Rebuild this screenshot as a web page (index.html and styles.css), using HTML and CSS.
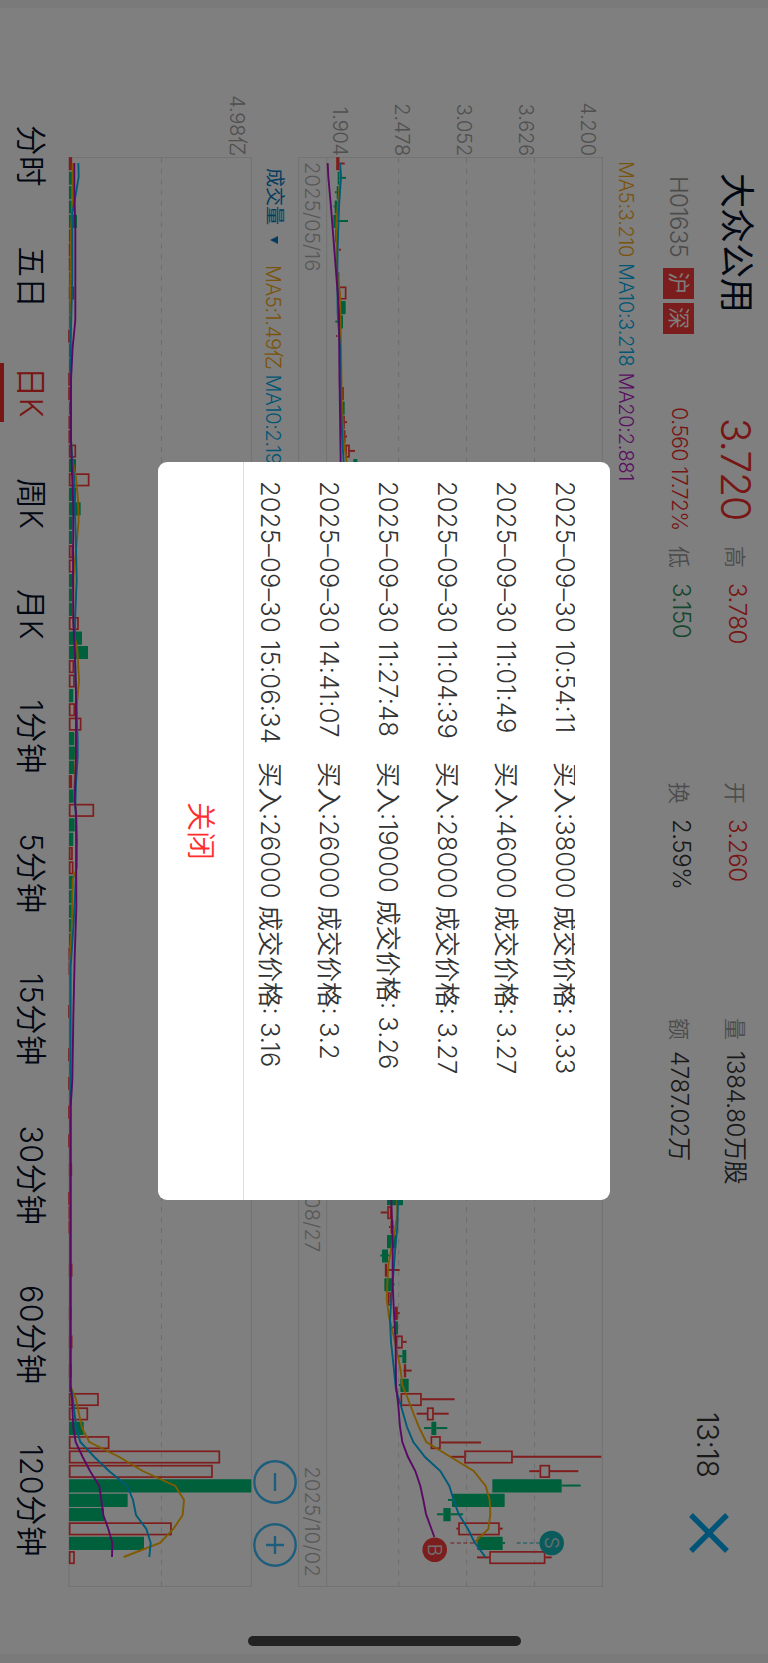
FILE: index.html
```html
<!DOCTYPE html>
<html lang="zh-CN">
<head>
    <meta charset="UTF-8">
    <title>大众公用 日K</title>
    <link rel="stylesheet" href="styles.css">
</head>
<body>
    <div class="screen">
        <header class="header">
            <div class="name">大众公用</div>
            <div class="price">3.720</div>
            <div class="stat"><label>高</label><span class="red">3.780</span></div>
            <div class="stat"><label>开</label><span class="red">3.260</span></div>
            <div class="stat"><label>量</label><span>1384.80万股</span></div>
            <div class="clock">13:18</div>
            <div class="close">
                <svg width="40" height="40" viewBox="0 0 40 40"><path d="M2 2L38 38M38 2L2 38" stroke="#00a8f0" stroke-width="5.4" fill="none"/></svg>
            </div>
            <div class="code"><span>H01635</span><b>沪</b><b>深</b></div>
            <div class="change">0.560 17.72%</div>
            <div class="stat"><label>低</label><span class="green">3.150</span></div>
            <div class="stat"><label>换</label><span>2.59%</span></div>
            <div class="stat"><label>额</label><span>4787.02万</span></div>
        </header>

        <div class="ma">
            <span class="ma5">MA5:3.210</span>
            <span class="ma10">MA10:3.218</span>
            <span class="ma20">MA20:2.881</span>
        </div>
        <svg class="chart" id="priceChart" width="1663" height="312" viewBox="0 160 1663 312"></svg>

        <div class="ma ma-volume">
            <span class="indicator">成交量</span>
            <i class="arrow"></i>
            <span class="ma5">MA5:1.49亿</span>
            <span class="ma10">MA10:2.19亿</span>
        </div>
        <svg class="chart" id="volumeChart" width="1663" height="190" viewBox="0 514 1663 190"></svg>

        <nav class="tabs">
            <span>分时</span>
            <span>五日</span>
            <span class="active">日K</span>
            <span>周K</span>
            <span>月K</span>
            <span>1分钟</span>
            <span>5分钟</span>
            <span>15分钟</span>
            <span>30分钟</span>
            <span>60分钟</span>
            <span>120分钟</span>
        </nav>

        <div class="zoom">
            <svg width="44" height="44" viewBox="0 0 44 44"><circle cx="22" cy="22" r="20.7"/><path d="M13 22H31"/></svg>
            <svg width="44" height="44" viewBox="0 0 44 44"><circle cx="22" cy="22" r="20.7"/><path d="M13 22H31M22 13V31"/></svg>
        </div>

        <div class="edge edge-left"></div>
        <div class="edge edge-right"></div>
        <div class="mask"></div>
        <div class="home-bar"></div>

        <div class="modal">
            <div class="modal-body">
                <ul class="trades">
                    <li><time>2025–09–30 10:54:11</time><span>买入:38000 成交价格: 3.33</span></li>
                    <li><time>2025–09–30 11:01:49</time><span>买入:46000 成交价格: 3.27</span></li>
                    <li><time>2025–09–30 11:04:39</time><span>买入:28000 成交价格: 3.27</span></li>
                    <li><time>2025–09–30 11:27:48</time><span>买入:19000 成交价格: 3.26</span></li>
                    <li><time>2025–09–30 14:41:07</time><span>买入:26000 成交价格: 3.2</span></li>
                    <li><time>2025–09–30 15:06:34</time><span>买入:26000 成交价格: 3.16</span></li>
                </ul>
            </div>
            <div class="modal-close">关闭</div>
        </div>
    </div>

    <script src="chart.js"></script>
</body>
</html>
```
FILE: styles.css
```css
* {
    margin: 0;
    padding: 0;
    box-sizing: border-box;
}

html {
    overflow: hidden;
}

body {
    width: 768px;
    height: 1663px;
    overflow: hidden;
    background: #fff;
    font-family: Inter, 'Noto Sans CJK SC', sans-serif;
    font-weight: 350;
}

/* landscape screen turned onto a portrait page */
.screen {
    position: relative;
    width: 1663px;
    height: 768px;
    display: flex;
    flex-direction: column;
    transform-origin: 0 0;
    transform: translateX(768px) rotate(90deg);
    background: #fff;
    color: #333;
    overflow: hidden;
    white-space: nowrap;
}

.header {
    height: 124px;
    flex: none;
    padding-left: 173px;
    display: grid;
    grid-template-columns: 226px 140px 7px 236px 236px 236px 158px 101px 1fr;
    grid-template-rows: 64px 48px;
    align-items: center;
}

.name {
    font-size: 35px;
    font-weight: 400;
    padding-bottom: 7px;
    color: #040e28;
}

.price {
    grid-column: 2;
    text-align: center;
    font-size: 41px;
    letter-spacing: -1.2px;
    color: #f02c2c;
}

.stat {
    display: flex;
    align-items: center;
    padding-bottom: 3px;
    font-size: 24px;
    letter-spacing: -0.4px;
}

.price + .stat,
.change + .stat {
    grid-column: 4;
}

.stat label {
    width: 37px;
    font-size: 22px;
    letter-spacing: 0;
    color: #999;
}

.stat:nth-of-type(5) label,
.stat:last-child label {
    width: 33px;
}

.red {
    color: #f02c2c;
}

.green {
    color: #2c8f5e;
}

.clock {
    grid-column: 8;
    grid-row: 1 / 3;
    font-size: 30px;
    letter-spacing: -0.7px;
    padding-top: 7px;
}

.close {
    grid-column: 9;
    grid-row: 1 / 3;
    height: 40px;
    margin-top: 6px;
}

.close svg,
.chart,
.zoom svg {
    display: block;
}

.code {
    grid-column: 1;
    grid-row: 2;
    display: flex;
    align-items: center;
    gap: 4px;
    margin-top: 2px;
    padding-left: 3px;
    font-size: 24px;
    letter-spacing: -0.7px;
    color: #999;
}

.code span {
    width: 87.5px;
}

.code b {
    width: 31px;
    height: 31px;
    line-height: 30px;
    text-align: center;
    font-size: 22px;
    font-weight: 350;
    letter-spacing: 0;
    background: #f93a3a;
    color: #fff;
}

.change {
    grid-column: 2;
    text-align: center;
    font-size: 21px;
    letter-spacing: -0.5px;
    color: #f02c2c;
}

.ma {
    height: 36px;
    flex: none;
    padding-left: 161px;
    display: flex;
    align-items: center;
    gap: 6px;
    font-size: 20px;
    letter-spacing: -0.3px;
}

.ma5 {
    color: #f5a814;
}

.ma10 {
    color: #00acea;
}

.ma20 {
    color: #b41ec4;
}

.ma-volume {
    height: 42px;
    gap: 5px;
    padding-left: 168px;
}

.indicator {
    font-size: 19px;
    letter-spacing: 0;
    padding-bottom: 3px;
    font-weight: 400;
    color: #0878c0;
}

.arrow {
    border: 4px solid transparent;
    border-top: 8px solid #0878c0;
    border-bottom: 0;
    margin: 2px 16px 0 6px;
}

.chart {
    flex: none;
}

.chart text {
    font-size: 20px;
    letter-spacing: -0.2px;
    fill: #a0a0a0;
}

.chart .date {
    letter-spacing: 0.3px;
    fill: #b0b0b0;
}

.chart .mark {
    font-size: 19px;
    fill: #e0e0e0;
}

.frame {
    fill: none;
    stroke: #e6e6e6;
    stroke-width: 1.2;
}

.dash {
    stroke: #dadada;
    stroke-width: 1;
    stroke-dasharray: 5 5.7;
}

.tabs {
    height: 64px;
    flex: none;
    padding: 0 106px 0 125px;
    display: flex;
    justify-content: space-between;
    font-size: 30.5px;
    letter-spacing: 0.4px;
    line-height: 66px;
    color: #040e28;
}

.tabs .active {
    color: #f02c2c;
    border-bottom: 4px solid #f02c2c;
    padding: 0 4px;
    margin: 0 -3px 0 -5px;
}

.zoom {
    position: absolute;
    left: 1460px;
    top: 471px;
    display: flex;
    gap: 19px;
}

.zoom svg {
    fill: none;
    stroke: #3cbcfa;
    stroke-width: 2.4;
}

.edge {
    position: absolute;
    top: 0;
    width: 8px;
    height: 768px;
    background: #f5f5f5;
}

.edge-left {
    left: 0;
}

.edge-right {
    right: 0;
    width: 9px;
}

.mask {
    position: absolute;
    inset: 0;
    background: rgba(0, 0, 0, 0.5);
}

.home-bar {
    position: absolute;
    left: 1636px;
    top: 247px;
    width: 10px;
    height: 273px;
    border-radius: 5px;
    background: #222;
}

.modal {
    position: absolute;
    left: 462px;
    top: 158px;
    width: 738px;
    height: 452px;
    padding-top: 35px;
    border-radius: 9px;
    background: #fff;
}

.modal-body {
    height: 332px;
    overflow: hidden;
    border-bottom: 1px solid #ddd;
}

.trades {
    list-style: none;
    margin-top: -20px;
    padding-left: 19px;
    font-size: 25.5px;
    letter-spacing: 0;
}

.trades li {
    display: flex;
    height: 59px;
    line-height: 59px;
}

.trades time {
    width: 281px;
    letter-spacing: 0.2px;
}

.modal-close {
    height: 85px;
    line-height: 86px;
    text-align: center;
    font-size: 29px;
    color: #ff2d2d;
}
```
FILE: chart.js
```js
const UP = '#ff3a3a';
const DOWN = '#00c078';
const MA5 = '#ffb400';
const MA10 = '#00b4f0';
const MA20 = '#b414c8';

// time axis: first candle and distance between candles
const START = 163.5;
const STEP = 14.37;
const BODY = 12.4;

const priceY = v => 478 - v / 3;
const volumeY = v => 768 - v / 3;

// index: [direction, body low, body high, low, high]
const candles = {
    0: ['u', 139, 148, 139, 164],
    1: ['d', 143, 148, 143, 168],
    2: ['d', 140, 146, 135, 146],
    3: ['d', 134, 141, 131, 141],
    4: ['d', 130, 140, 130, 174],
    5: ['d', 135, 140, 135, 142],
    6: ['t', 146, 149, 146, 153],
    8: ['d', 144, 148, 144, 148],
    9: ['u', 145, 169, 145, 169],
    10: ['d', 152, 167, 152, 167],
    11: ['d', 151, 159, 136, 159],
    12: ['t', 138, 142, 138, 142],
    14: ['d', 151, 155, 151, 155],
    15: ['u', 151, 153, 151, 153],
    16: ['u', 155, 161, 155, 161],
    17: ['d', 157, 164, 157, 164],
    18: ['u', 159, 164, 159, 171],
    19: ['u', 162, 166, 162, 171],
    20: ['u', 166, 179, 166, 195],
    21: ['d', 190, 202, 190, 202],
    72: ['d', 291, 339, 291, 339],
    73: ['u', 292, 304, 272, 304],
    74: ['u', 302, 310, 297, 312],
    75: ['d', 291, 319, 291, 319],
    76: ['d', 276, 294, 271, 300],
    77: ['u', 287, 291, 287, 329],
    78: ['d', 283, 306, 283, 314],
    79: ['u', 294, 304, 294, 304],
    80: ['u', 315, 323, 315, 329],
    81: ['d', 312, 324, 304, 324],
    82: ['u', 318, 338, 318, 350],
    83: ['d', 337, 349, 326, 349],
    84: ['u', 346, 348, 340, 365],
    85: ['d', 331, 356, 326, 356],
    86: ['u', 332, 395, 332, 494],
    87: ['u', 411, 431, 380, 476],
    88: ['d', 424, 439, 402, 472],
    89: ['u', 422, 452, 422, 573],
    90: ['u', 523, 668, 481, 934],
    91: ['u', 749, 780, 718, 865],
    92: ['d', 607, 815, 607, 872],
    93: ['d', 486, 644, 474, 644],
    94: ['d', 460, 482, 441, 519],
    95: ['u', 505, 629, 499, 638],
    96: ['d', 562, 638, 562, 645],
    97: ['u', 598, 766, 561, 785]
};

const volumes = [
    'u216', 'd216', 'd215', 'd215', 'd231', 'd215', 'u214', 'u214', 'd214', 'u222',
    'd214', 'd213', 'u211', 'd211', 'd211', 'u211', 'u211', 'd212', 'u212', 'u212',
    'u228', 'd228', 'u268', 'd228', 'd242', 'd217', 'd216', 'u219', 'u224', 'd219',
    'd216', 'd216', 'u236', 'd246', 'd264', 'u222', 'u224', 'd220', 'u225', 'u244',
    'd223', 'd225', 'd222', 'u216', 'd221', 'u282', 'd224', 'd220', 'u218', 'u220',
    'd220', 'd217', 'd217', 'd215', 'd214', 'u212', 'u212', 'd212', 'd212', 'u211',
    'd211', 'd211', 'u211', 'd213', 'u211', 'd212', 'u211', 'd211', 'u211', 'd211',
    'u216', 'd212', 'u211', 'u212', 'u212', 'd212', 'd212', 'u217', 'd212', 'd211',
    'u214', 'd212', 'u217', 'd212', 'u215', 'd213', 'u296', 'u264', 'd251', 'u328',
    'u660', 'u638', 'd754', 'd383', 'd312', 'u515', 'd432', 'u224'
];

const priceLines = [
    [MA5, '163,150 177,152 206,143 223,139 267,140 293,150 347,153 397,155 440,161 462,170 1200,322 1217,321 1230,315 1241,308 1256,300 1263,296 1284,292 1299,290 1317,297 1333,309 1350,320 1370,332 1385,337 1399,354 1414,371 1428,388 1442,409 1457,482 1471,551 1486,587 1500,599 1514,601 1529,595 1542,555'],
    [MA10, '163,150 177,153 207,147 247,143 273,142 313,143 347,150 397,152 440,157 462,161 1200,324 1227,322 1247,316 1270,311 1299,304 1320,300 1342,303 1370,312 1390,318 1406,333 1427,351 1442,370 1457,405 1471,451 1486,478 1500,491 1514,506 1529,534 1542,553 1557,586'],
    [MA20, '163,113 177,115 207,123 237,130 267,137 293,143 313,147 363,148 413,150 462,152 1200,304 1241,308 1284,308 1313,312 1342,317 1385,318 1406,325 1427,330 1442,337 1457,354 1471,376 1486,391 1500,400 1514,408 1525,420 1537,433']
];

const volumeLines = [
    [MA5, '163,218 203,218 230,213 300,211 440,213 460,217 477,228 500,234 520,236 547,229 573,221 613,219 633,222 650,232 680,237 707,230 727,229 757,227 793,222 817,230 867,231 880,218 920,216 940,213 957,210 1386,211 1399,228 1414,237 1428,246 1442,268 1457,358 1471,428 1486,526 1500,552 1515,548 1529,520 1543,480 1557,371'],
    [MA10, '163,235 177,236 193,228 213,217 280,217 340,212 440,213 460,217 477,222 547,228 580,230 613,226 647,224 693,228 740,233 757,233 783,228 807,226 840,231 873,228 923,221 943,217 967,212 1386,211 1399,219 1414,224 1428,229 1442,241 1457,283 1471,327 1486,382 1500,399 1515,408 1529,439 1543,452 1557,448'],
    [MA20, '163,223 193,223 227,226 320,226 347,218 380,213 440,213 473,216 507,220 573,219 623,220 657,225 693,228 757,228 800,224 813,228 907,229 957,224 1017,220 1080,217 1107,212 1386,212 1399,216 1414,218 1428,220 1442,227 1457,248 1471,270 1486,298 1500,304 1515,310 1529,325 1543,337 1557,336']
];

function bar(i, dir, low, high, toY) {
    const x = START + i * STEP - BODY / 2;
    const top = toY(high);
    const h = toY(low) - top;
    if (dir === 'd') {
        return `<rect x="${x}" y="${top}" width="${BODY + 0.8}" height="${h}" rx="0.6" fill="${DOWN}"/>`;
    }
    return `<rect x="${x + 0.7}" y="${top + 0.7}" width="${BODY - 1}" height="${Math.max(h - 1.4, 0.6)}" fill="none" stroke="${UP}" stroke-width="1.7"/>`;
}

function wick(i, dir, low, high) {
    const x = START + i * STEP;
    const color = dir === 'd' ? DOWN : UP;
    return `<path d="M${x} ${priceY(low)}V${priceY(high)}" stroke="${color}" stroke-width="2"/>`;
}

function line([color, points], toY) {
    const list = points.split(' ').map(p => {
        const [x, v] = p.split(',');
        return `${x},${toY(v)}`;
    });
    return `<polyline points="${list.join(' ')}" fill="none" stroke="${color}" stroke-width="1.9"/>`;
}

function dash(y) {
    return `<path class="dash" d="M158 ${y}H1586"/>`;
}

function drawPrice() {
    let html = '<path class="frame" d="M157.5 165.7H1586.5V469.3H157.5ZM157.5 441.3H1586.5"/>';
    html += [233.5, 301.4, 369.3].map(dash).join('');
    ['4.200', '3.626', '3.052', '2.478', '1.904'].forEach((t, i) => {
        html += `<text x="156" y="${187 + i * 62}" text-anchor="end">${t}</text>`;
    });
    html += '<text class="date" x="162" y="463">2025/05/16</text>';
    html += '<text class="date" x="1252.5" y="463" text-anchor="end">2025/08/27</text>';
    html += '<text class="date" x="1577" y="463" text-anchor="end">2025/10/02</text>';

    for (const i in candles) {
        const [dir, low, high, min, max] = candles[i];
        html += wick(i, dir, min, low) + wick(i, dir, high, max);
        html += dir === 't' ? wick(i, dir, low, high) : bar(i, dir, low, high, priceY);
    }
    priceLines.forEach(l => html += line(l, priceY));

    // buy and sell marks
    html += `<path d="M1543 ${priceY(481)}V${priceY(560)}" stroke="#e03c3c" stroke-dasharray="4 2.5"/>`;
    html += `<path d="M1543 ${priceY(680)}V${priceY(748)}" stroke="#14b4b4" stroke-dasharray="4 2.5"/>`;
    html += '<circle cx="1549.7" cy="333.3" r="12.3" fill="#fa3c3c"/><text class="mark" x="1549.7" y="340" text-anchor="middle">B</text>';
    html += '<circle cx="1543" cy="216.3" r="12.3" fill="#14b8b8"/><text class="mark" x="1542.7" y="223" text-anchor="middle">S</text>';
    document.getElementById('priceChart').innerHTML = html;
}

function drawVolume() {
    let html = '<path class="frame" d="M157.5 516.5H1586.5V699H157.5Z"/>' + dash(606.5);
    html += '<text x="156" y="538" text-anchor="end">4.98亿</text>';
    volumes.forEach((v, i) => html += bar(i, v[0], 207, Number(v.slice(1)), volumeY));
    volumeLines.forEach(l => html += line(l, volumeY));
    document.getElementById('volumeChart').innerHTML = html;
}

drawPrice();
drawVolume();
```
